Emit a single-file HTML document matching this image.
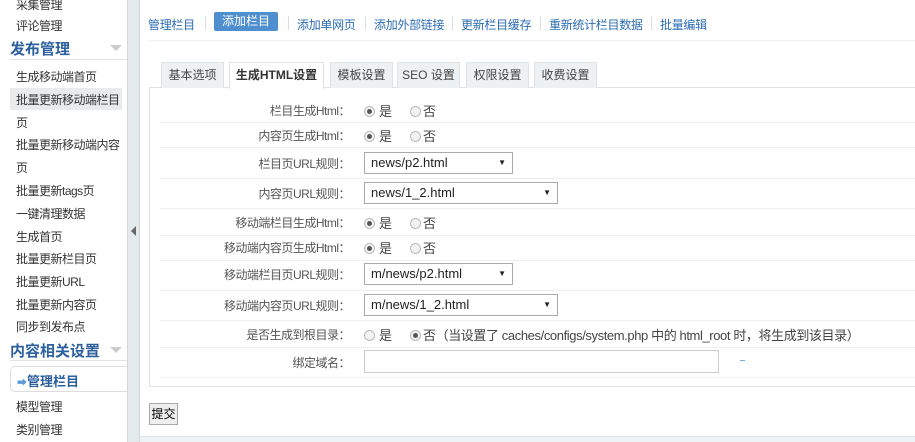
<!DOCTYPE html>
<html><head><meta charset="utf-8"><style>
*{margin:0;padding:0;box-sizing:border-box}
body{width:915px;height:442px;overflow:hidden;background:#fff;font-family:"Liberation Sans","Noto Sans CJK SC",sans-serif;font-size:12px;color:#444;position:relative}
.a{position:absolute;white-space:nowrap}
.side div{position:absolute;left:16px;font-size:12px;color:#333;letter-spacing:-0.5px;white-space:nowrap}
.hd{position:absolute;left:10px;font-size:15px;color:#2b5f9e;font-weight:bold}
.caret{position:absolute;left:110px;width:0;height:0;border-left:6px solid transparent;border-right:6px solid transparent;border-top:6px solid #ccc}
.hr{position:absolute;left:10px;width:118px;height:1px;background:#e3e3e3}
.nav{position:absolute;top:16px;font-size:12px;color:#2b6cb3;letter-spacing:-0.3px}
.sep{position:absolute;top:16px;width:1px;height:14px;background:#ddd}
.tab{position:absolute;top:62px;height:26px;border:1px solid #dfe3e6;border-bottom:none;background:#eef1f3;text-align:center;line-height:25px;color:#444;font-size:12px}
.line{position:absolute;left:160px;right:0;height:1px;background:#eceeef}
.lbl{position:absolute;right:565px;text-align:right;color:#555;letter-spacing:-0.5px}
.r{position:absolute;width:11px;height:11px;border-radius:50%;border:1px solid #bbb;background:#f2f2f2;margin-top:2px}
.r.on::after{content:"";position:absolute;left:2px;top:2px;width:5px;height:5px;border-radius:50%;background:#555}
.sel{position:absolute;left:364px;height:22px;border:1px solid #aaa;background:#fff;padding-left:6px;line-height:20px;color:#222;font-size:13px}
.sel::after{content:"▼";position:absolute;right:6px;top:0;font-size:8px}
</style></head><body>
<div style="position:absolute;left:0;top:0;width:128px;height:442px;background:#fff"></div>
<div class="side">
<div style="top:-4px">采集管理</div>
<div style="top:17px">评论管理</div>
<div style="top:68px">生成移动端首页</div>
<div style="top:88px;left:10px;width:112px;height:22px;background:#e8eaec"></div>
<div style="top:91px">批量更新移动端栏目</div>
<div style="top:114px">页</div>
<div style="top:136px">批量更新移动端内容</div>
<div style="top:159px">页</div>
<div style="top:182px">批量更新tags页</div>
<div style="top:205px">一键清理数据</div>
<div style="top:228px">生成首页</div>
<div style="top:250px">批量更新栏目页</div>
<div style="top:273px">批量更新URL</div>
<div style="top:296px">批量更新内容页</div>
<div style="top:318px">同步到发布点</div>
<div style="top:398px">模型管理</div>
<div style="top:421px">类别管理</div>
</div>
<div class="hd" style="top:38px">发布管理</div><div class="caret" style="top:45px"></div><div class="hr" style="top:59px"></div>
<div class="hd" style="top:340px">内容相关设置</div><div class="caret" style="top:347px"></div><div class="hr" style="top:360px"></div>
<div class="a" style="left:10px;top:366px;width:120px;height:26px;border:1px solid #ddd;border-right:none;border-radius:5px 0 0 5px;background:#fff"></div>
<div class="a" style="left:17px;top:371px;font-size:13px;font-weight:bold;color:#2b5f9e"><span style="color:#5a9bd5;font-size:10px">➡</span>管理栏目</div>
<div class="a" style="left:127px;top:0;width:13px;height:442px;background:#e3eaec;border-left:1px solid #d0d8da;border-right:1px solid #d0d8da"></div>
<div class="a" style="left:131px;top:226px;width:0;height:0;border-top:5px solid transparent;border-bottom:5px solid transparent;border-right:5px solid #666"></div>

<div class="nav" style="left:148px">管理栏目</div>
<div class="sep" style="left:205px"></div>
<div class="a" style="left:214px;top:12px;width:64px;height:19px;background:#4f8fcf;border-radius:2px;color:#fff;font-size:12px;text-align:center;line-height:19px">添加栏目</div>
<div class="sep" style="left:288px"></div>
<div class="nav" style="left:297px">添加单网页</div>
<div class="sep" style="left:365px"></div>
<div class="nav" style="left:374px">添加外部链接</div>
<div class="sep" style="left:452px"></div>
<div class="nav" style="left:461px">更新栏目缓存</div>
<div class="sep" style="left:540px"></div>
<div class="nav" style="left:549px">重新统计栏目数据</div>
<div class="sep" style="left:651px"></div>
<div class="nav" style="left:660px">批量编辑</div>
<div class="a" style="left:148px;top:40px;width:767px;height:1px;background:#eceeef"></div>

<div class="a" style="left:149px;top:87px;width:770px;height:300px;border:1px solid #dfe3e6"></div>
<div class="tab" style="left:161px;width:63px">基本选项</div>
<div class="tab" style="left:229px;width:95px;background:#fff;height:27px;font-weight:bold;color:#333">生成HTML设置</div>
<div class="tab" style="left:330px;width:63px">模板设置</div>
<div class="tab" style="left:397px;width:63px">SEO 设置</div>
<div class="tab" style="left:466px;width:63px">权限设置</div>
<div class="tab" style="left:534px;width:63px">收费设置</div>

<div class="line" style="top:122px"></div><div class="line" style="top:147px"></div><div class="line" style="top:178px"></div><div class="line" style="top:208px"></div><div class="line" style="top:235px"></div><div class="line" style="top:260px"></div><div class="line" style="top:290px"></div><div class="line" style="top:320px"></div><div class="line" style="top:347px"></div><div class="line" style="top:377px"></div>

<div class="lbl" style="top:102px">栏目生成Html：</div>
<div class="r on" style="left:364px;top:104px"></div><div class="a" style="left:379px;top:101px;font-size:13px">是</div>
<div class="r" style="left:410px;top:104px"></div><div class="a" style="left:423px;top:101px;font-size:13px">否</div>
<div class="lbl" style="top:127px">内容页生成Html：</div>
<div class="r on" style="left:364px;top:129px"></div><div class="a" style="left:379px;top:126px;font-size:13px">是</div>
<div class="r" style="left:410px;top:129px"></div><div class="a" style="left:423px;top:126px;font-size:13px">否</div>
<div class="lbl" style="top:155px">栏目页URL规则：</div>
<div class="sel" style="top:152px;width:149px">news/p2.html</div>
<div class="lbl" style="top:185px">内容页URL规则：</div>
<div class="sel" style="top:182px;width:194px">news/1_2.html</div>
<div class="lbl" style="top:214px">移动端栏目生成Html：</div>
<div class="r on" style="left:364px;top:216px"></div><div class="a" style="left:379px;top:213px;font-size:13px">是</div>
<div class="r" style="left:410px;top:216px"></div><div class="a" style="left:423px;top:213px;font-size:13px">否</div>
<div class="lbl" style="top:239px">移动端内容页生成Html：</div>
<div class="r on" style="left:364px;top:241px"></div><div class="a" style="left:379px;top:238px;font-size:13px">是</div>
<div class="r" style="left:410px;top:241px"></div><div class="a" style="left:423px;top:238px;font-size:13px">否</div>
<div class="lbl" style="top:266px">移动端栏目页URL规则：</div>
<div class="sel" style="top:263px;width:149px">m/news/p2.html</div>
<div class="lbl" style="top:297px">移动端内容页URL规则：</div>
<div class="sel" style="top:294px;width:194px">m/news/1_2.html</div>
<div class="lbl" style="top:326px">是否生成到根目录：</div>
<div class="r" style="left:364px;top:328px"></div><div class="a" style="left:379px;top:325px;font-size:13px">是</div>
<div class="r on" style="left:410px;top:328px"></div><div class="a" style="left:423px;top:325px;font-size:13px;letter-spacing:-0.4px">否（当设置了 caches/configs/system.php 中的 html_root 时，将生成到该目录）</div>
<div class="lbl" style="top:354px">绑定域名：</div>
<div class="a" style="left:364px;top:350px;width:355px;height:23px;border:1px solid #ccc"></div>
<div class="a" style="left:740px;top:360px;width:5px;height:1px;background:#7aaadd"></div>

<div class="a" style="left:149px;top:403px;width:29px;height:22px;border:1px solid #aaa;background:#eee;font-size:12px;line-height:20px;text-align:center;color:#000">提交</div>
<div class="a" style="left:140px;top:436px;width:775px;height:6px;background:#eef3f6;border-top:1px solid #dde6ea"></div>
</body></html>
